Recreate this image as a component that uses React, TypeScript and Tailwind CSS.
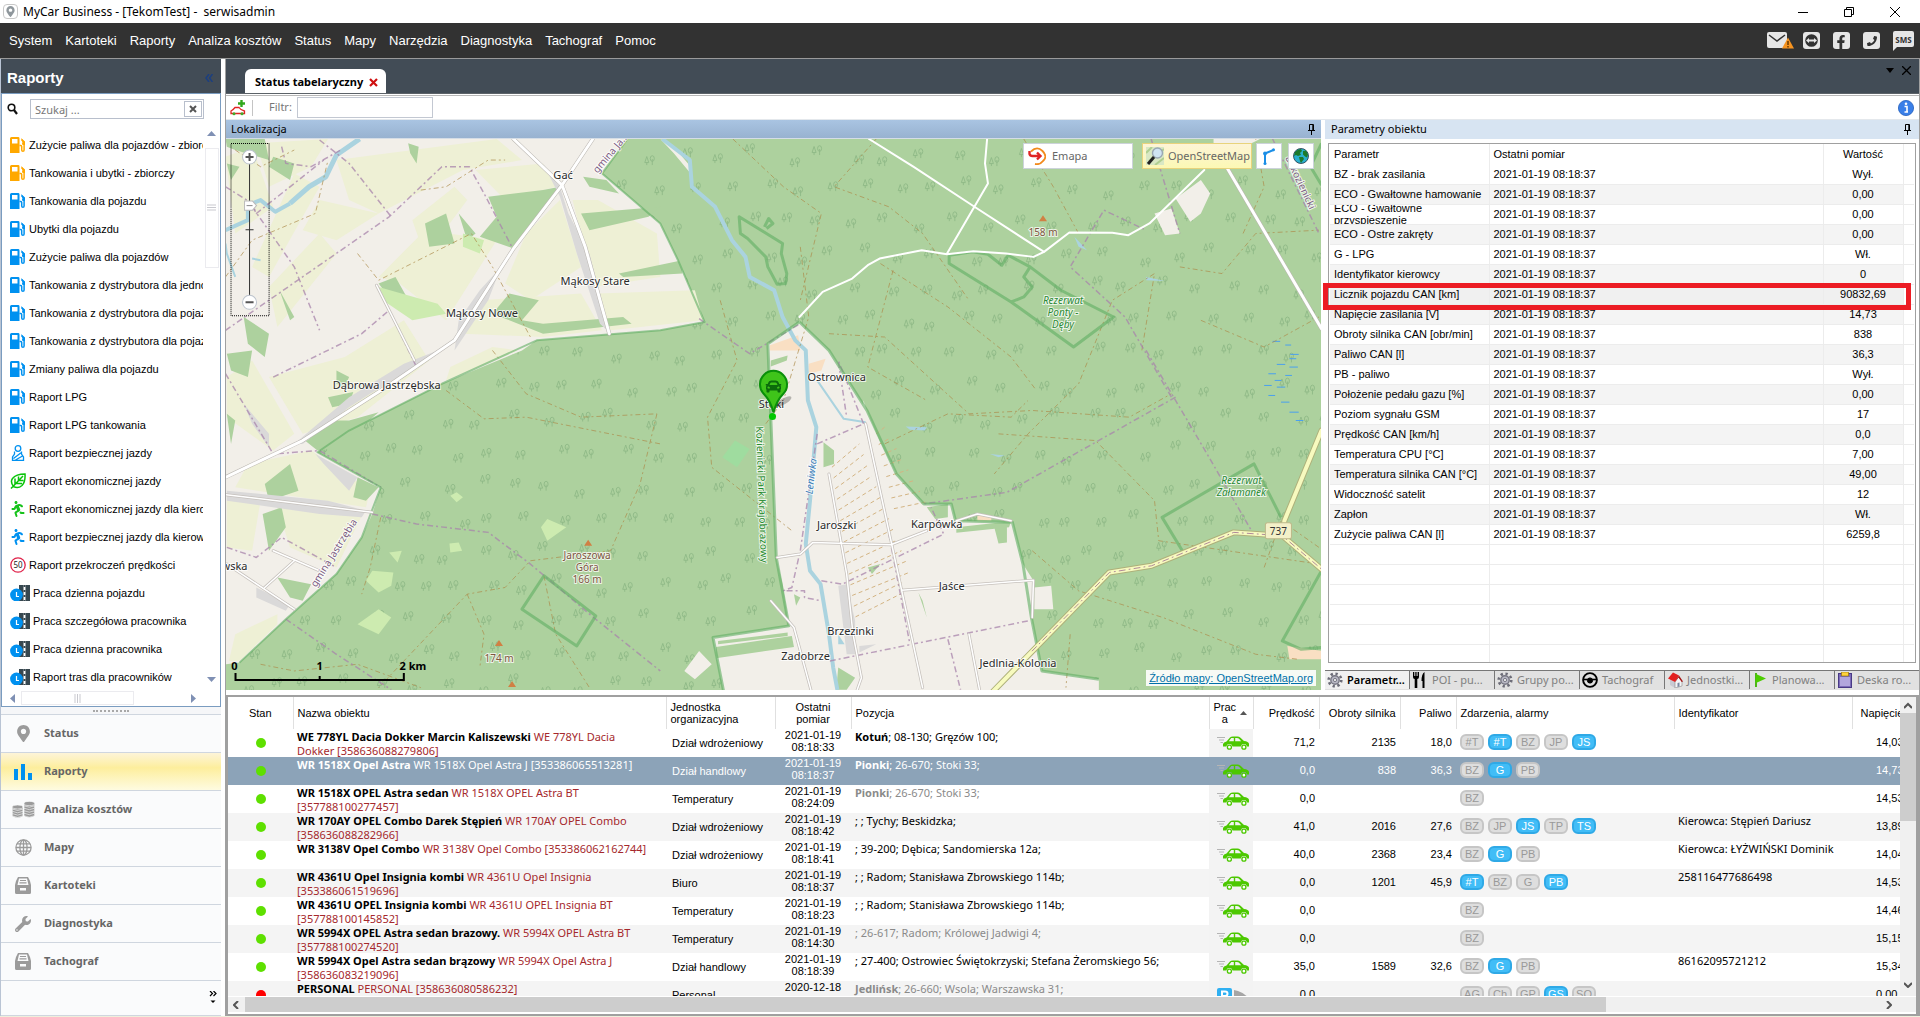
import React from "react";
import { FaCar, FaFacebookF, FaMapMarkerAlt, FaPhoneAlt, FaRunning, FaWrench } from "react-icons/fa";

const MENU = ["System", "Kartoteki", "Raporty", "Analiza kosztów", "Status", "Mapy", "Narzędzia", "Diagnostyka", "Tachograf", "Pomoc"];

type ReportKind = "fuelOrange" | "fuel" | "belt" | "leaf" | "runGreen" | "runBlue" | "limit" | "work";

const REPORTS: [ReportKind, string][] = [
  ["fuelOrange", "Zużycie paliwa dla pojazdów - zbiorczy"],
  ["fuelOrange", "Tankowania i ubytki - zbiorczy"],
  ["fuel", "Tankowania dla pojazdu"],
  ["fuel", "Ubytki dla pojazdu"],
  ["fuel", "Zużycie paliwa dla pojazdów"],
  ["fuel", "Tankowania z dystrybutora dla jednostki"],
  ["fuel", "Tankowania z dystrybutora dla pojazdu"],
  ["fuel", "Tankowania z dystrybutora dla pojazdów"],
  ["fuel", "Zmiany paliwa dla pojazdu"],
  ["fuel", "Raport LPG"],
  ["fuel", "Raport LPG tankowania"],
  ["belt", "Raport bezpiecznej jazdy"],
  ["leaf", "Raport ekonomicznej jazdy"],
  ["runGreen", "Raport ekonomicznej jazdy dla kierowcy"],
  ["runBlue", "Raport bezpiecznej jazdy dla kierowcy"],
  ["limit", "Raport przekroczeń prędkości"],
  ["work", "Praca dzienna pojazdu"],
  ["work", "Praca szczegółowa pracownika"],
  ["work", "Praca dzienna pracownika"],
  ["work", "Raport tras dla pracowników"],
];

const PARAMS: [string, string][] = [
  ["BZ - brak zasilania", "Wył."],
  ["ECO - Gwałtowne hamowanie", "0,00"],
  ["ECO - Gwałtowne przyspieszenie", "0,00"],
  ["ECO - Ostre zakręty", "0,00"],
  ["G - LPG", "Wł."],
  ["Identyfikator kierowcy", "0"],
  ["Licznik pojazdu CAN [km]", "90832,69"],
  ["Napięcie zasilania [V]", "14,73"],
  ["Obroty silnika CAN [obr/min]", "838"],
  ["Paliwo CAN [l]", "36,3"],
  ["PB - paliwo", "Wył."],
  ["Położenie pedału gazu [%]", "0,00"],
  ["Poziom sygnału GSM", "17"],
  ["Prędkość CAN [km/h]", "0,0"],
  ["Temperatura CPU [°C]", "7,00"],
  ["Temperatura silnika CAN [°C]", "49,00"],
  ["Widoczność satelit", "12"],
  ["Zapłon", "Wł."],
  ["Zużycie paliwa CAN [l]", "6259,8"],
];

type Vehicle = {
  name: string;
  tail: string;
  second?: string;
  unit: string;
  date: string;
  time: string;
  city?: string;
  place: string;
  old?: boolean;
  speed: string;
  rpm: string;
  fuel: string;
  tags: string[];
  ident: string;
  volt: string;
  parked?: boolean;
};

/* A tag that starts with "*" is switched on. */
const VEHICLES: Vehicle[] = [
  { name: "WE 778YL Dacia Dokker Marcin Kaliszewski", tail: "WE 778YL Dacia", second: "Dokker [358636088279806]", unit: "Dział wdrożeniowy", date: "2021-01-19", time: "08:18:33", city: "Kotuń", place: "; 08-130; Gręzów 100;", speed: "71,2", rpm: "2135", fuel: "18,0", tags: ["#T", "*#T", "BZ", "JP", "*JS"], ident: "", volt: "14,03" },
  { name: "WR 1518X Opel Astra", tail: "WR 1518X Opel Astra J [353386065513281]", unit: "Dział handlowy", date: "2021-01-19", time: "08:18:37", city: "Pionki", place: "; 26-670; Stoki 33;", speed: "0,0", rpm: "838", fuel: "36,3", tags: ["BZ", "*G", "PB"], ident: "", volt: "14,73" },
  { name: "WR 1518X OPEL Astra sedan", tail: "WR 1518X OPEL Astra BT", second: "[357788100277457]", unit: "Temperatury", date: "2021-01-19", time: "08:24:09", city: "Pionki", place: "; 26-670; Stoki 33;", old: true, speed: "0,0", rpm: "", fuel: "", tags: ["BZ"], ident: "", volt: "14,53" },
  { name: "WR 170AY OPEL Combo Darek Stępień", tail: "WR 170AY OPEL Combo", second: "[358636088282966]", unit: "Dział wdrożeniowy", date: "2021-01-19", time: "08:18:42", place: "; ; Tychy; Beskidzka;", speed: "41,0", rpm: "2016", fuel: "27,6", tags: ["BZ", "JP", "*JS", "TP", "*TS"], ident: "Kierowca: Stępień Dariusz", volt: "13,89" },
  { name: "WR 3138V Opel Combo", tail: "WR 3138V Opel Combo [353386062162744]", unit: "Dział wdrożeniowy", date: "2021-01-19", time: "08:18:41", place: "; 39-200; Dębica; Sandomierska 12a;", speed: "40,0", rpm: "2368", fuel: "23,4", tags: ["BZ", "*G", "PB"], ident: "Kierowca: ŁYŻWIŃSKI Dominik", volt: "14,04" },
  { name: "WR 4361U Opel Insignia kombi", tail: "WR 4361U Opel Insignia", second: "[353386061519696]", unit: "Biuro", date: "2021-01-19", time: "08:18:37", place: "; ; Radom; Stanisława Zbrowskiego 114b;", speed: "0,0", rpm: "1201", fuel: "45,9", tags: ["*#T", "BZ", "G", "*PB"], ident: "258116477686498", volt: "14,53" },
  { name: "WR 4361U OPEL Insignia kombi", tail: "WR 4361U OPEL Insignia BT", second: "[357788100145852]", unit: "Temperatury", date: "2021-01-19", time: "08:18:23", place: "; ; Radom; Stanisława Zbrowskiego 114b;", speed: "0,0", rpm: "", fuel: "", tags: ["BZ"], ident: "", volt: "14,46" },
  { name: "WR 5994X OPEL Astra sedan brazowy.", tail: "WR 5994X OPEL Astra BT", second: "[357788100274520]", unit: "Temperatury", date: "2021-01-19", time: "08:14:30", place: "; 26-617; Radom; Królowej Jadwigi 4;", old: true, speed: "0,0", rpm: "", fuel: "", tags: ["BZ"], ident: "", volt: "15,15" },
  { name: "WR 5994X Opel Astra sedan brązowy", tail: "WR 5994X Opel Astra J", second: "[358636083219096]", unit: "Dział handlowy", date: "2021-01-19", time: "08:18:39", place: "; 27-400; Ostrowiec Świętokrzyski; Stefana Żeromskiego 56;", speed: "35,0", rpm: "1589", fuel: "32,6", tags: ["BZ", "*G", "PB"], ident: "86162095721212", volt: "15,34" },
  { name: "PERSONAL", tail: "PERSONAL [358636080586232]", unit: "Personal", date: "2020-12-18", time: "", city: "Jedlińsk", place: "; 26-660; Wsola; Warszawska 31;", old: true, speed: "0,0", rpm: "", fuel: "", tags: ["AG", "Ch", "GP", "*GS", "SO"], ident: "", volt: "0,00", parked: true },
];

function Fuel({ color }: { color: string }) {
  return (
    <svg width="16" height="16" viewBox="0 0 16 16">
      <path fillRule="evenodd" fill={color} d="M1.5 0h6.600q1.400 0 1.400 1.400V16H0V1.500Q0 0 1.500 0ZM2 2v4.500h5.500V2Z" />
      <path d="M9.500 8.500h1.300q.9 0 .9 1v3.500q0 1.300 1.200 1.300t1.200-1.300V5.500L11.500 2.500" fill="none" stroke={color} strokeWidth="1.500" />
      <path d="M11 1l4 3.500v3.500h-2.500q-1-1.500 0-3Z" fill={color} />
    </svg>
  );
}

function ReportIcon({ kind }: { kind: ReportKind }) {
  switch (kind) {
    case "fuelOrange":
      return <Fuel color="#ffa800" />;
    case "fuel":
      return <Fuel color="#0091f0" />;
    case "belt":
      return (
        <svg width="14" height="16" viewBox="0 0 14 16" fill="none" stroke="#0091f0" strokeWidth="1.300">
          <circle cx="7" cy="3.500" r="2.800" />
          <path d="M3.500 6.500V9L1.500 12v3.300h11V12l-2-3V6.500M11 7L2.500 13.500M4.500 15l7-4" />
        </svg>
      );
    case "leaf":
      return (
        <svg width="16" height="16" viewBox="0 0 16 16" fill="none" stroke="#09c409" strokeWidth="1.500">
          <path d="M15 1Q15.500 9 12 12.500Q8 16 3.500 13.500Q0 9 2.500 5.500Q6 1 15 1ZM1 15.500L13 3M5 11V5.500M8.500 8V3.500M6 10.500h6M9 7.500h4.500" />
        </svg>
      );
    case "runGreen":
      return <FaRunning className="-scale-x-100" size={16} color="#17c21c" />;
    case "runBlue":
      return <FaRunning className="-scale-x-100" size={16} color="#0091f0" />;
    case "limit":
      return (
        <svg width="16" height="16" viewBox="0 0 16 16">
          <circle cx="8" cy="8" r="7.200" fill="#fff" stroke="#e0234a" strokeWidth="1.300" />
          <text x="8" y="11" textAnchor="middle" fontSize="8" fontFamily="Noto Sans" fill="#222">50</text>
        </svg>
      );
    default:
      return (
        <svg width="20" height="16" viewBox="0 0 20 16">
          <path d="M9 0h4.500v16H9zM15.500 0H20v16h-4.500z" fill="#37474f" />
          <path d="M14.500 0v16" stroke="#37474f" strokeWidth="2" strokeDasharray="2 3" />
          <circle cx="6.500" cy="10" r="6.400" fill="#0091f0" />
          <path d="M6.500 7v4.500H9" stroke="#fff" fill="none" strokeWidth="1.200" />
        </svg>
      );
  }
}

function Drawer() {
  return (
    <svg width="16" height="17" viewBox="0 0 16 17">
      <path fillRule="evenodd" fill="#9b9b9b" d="M3 0h10l2 4 1 4v7.500q0 1.500-1.500 1.500h-13Q0 17 0 15.500V8l1-4ZM4 1.500L2.500 8h11L12 1.500ZM5 11v2.500h6V11Z" />
      <path d="M5 3.500h6M4.500 5.800h7" stroke="#9b9b9b" strokeWidth="1.200" />
    </svg>
  );
}

function NavIcon({ name }: { name: string }) {
  if (name === "Status") return <FaMapMarkerAlt size={17} color="#9b9b9b" />;
  if (name === "Raporty")
    return (
      <svg width="18" height="16" viewBox="0 0 18 16" fill="#0091f0">
        <path d="M0 5h4v11H0zM7 0h4v16H7zM14 9h4v7h-4z" />
      </svg>
    );
  if (name === "Analiza kosztów")
    return (
      <svg width="23" height="17" viewBox="0 0 23 17" fill="#9b9b9b" stroke="#fafbfc" strokeWidth=".6">
        {[14.5, 12.2, 9.900, 7.600].map((y) => (
          <path key={y} d={`M.3 ${y - 2}v2.400q5.300 3 10.600 0v-2.400z`} />
        ))}
        <ellipse cx="5.600" cy="6" rx="5.300" ry="2" />
        {[14.5, 12, 9.500, 7, 4.500].map((y) => (
          <path key={y} d={`M12 ${y - 2.200}v2.400q5.300 3 10.600 0v-2.400z`} />
        ))}
        <ellipse cx="17.300" cy="2.500" rx="5.300" ry="2.100" />
      </svg>
    );
  if (name === "Mapy")
    return (
      <svg width="17" height="17" viewBox="0 0 17 17" fill="none" stroke="#9b9b9b" strokeWidth="1.300">
        <circle cx="8.500" cy="8.500" r="7.600" />
        <ellipse cx="8.500" cy="8.500" rx="3.600" ry="7.600" />
        <path d="M8.500 1v15M1 8.500h15M2 4.800h13M2 12.200h13" />
      </svg>
    );
  if (name === "Diagnostyka") return <FaWrench size={16} color="#9b9b9b" />;
  return <Drawer />;
}

function Pin() {
  return (
    <svg width="7" height="11" viewBox="0 0 7 11" fill="none" stroke="#000">
      <path d="M1.500 6V.5h4V6M0 6.500h7M3.500 7v4M4.800 1v5" />
    </svg>
  );
}

function Gear() {
  return (
    <svg width="16" height="16" viewBox="0 0 16 16">
      <circle cx="8" cy="8" r="6.300" fill="none" stroke="#6d6d78" strokeWidth="2.600" strokeDasharray="2.300 2.600" />
      <circle cx="8" cy="8" r="4.200" fill="#b8b8c4" stroke="#777783" strokeWidth="1.400" />
      <circle cx="8" cy="8" r="1.600" fill="#f0f0f0" stroke="#666672" strokeWidth=".8" />
    </svg>
  );
}

function TabIcon({ kind }: { kind: string }) {
  if (kind === "gear") return <Gear />;
  if (kind === "food")
    return (
      <svg width="14" height="16" viewBox="0 0 14 16" fill="#000">
        <path d="M0 0h1.300v4h1V0h1.300v4h1V0H6v5Q6 6.800 4.300 7v9H1.700V7Q0 6.800 0 5ZM11.500 0V16H9.500V9H8.500Q8.500 2 11.500 0Z" />
      </svg>
    );
  if (kind === "wheel")
    return (
      <svg width="16" height="16" viewBox="0 0 16 16" fill="none" stroke="#000">
        <circle cx="8" cy="8" r="6.900" strokeWidth="1.900" />
        <path d="M2 7.500h12" strokeWidth="1.600" />
        <circle cx="8" cy="8.500" r="2.600" fill="#000" />
      </svg>
    );
  if (kind === "house")
    return (
      <svg width="15" height="16" viewBox="0 0 15 16">
        <path d="M2 7l5 3v6l-5-3z" fill="#c9c9d2" />
        <path d="M7 10l3.500-5L14 9v5l-7 2z" fill="#f4f4f6" stroke="#888" strokeWidth=".6" />
        <path d="M0 6.500L5 .5l6 3L7 10z" fill="#e32020" />
        <path d="M11 3.500L15 9.500l-1.300.5L10.500 5.500 7 10z" fill="#a51515" />
        <path d="M9.500 11l2-.6v4l-2 .6z" fill="#7a86a0" />
      </svg>
    );
  if (kind === "flag")
    return (
      <svg width="11" height="14" viewBox="0 0 11 14">
        <path d="M1 0v14" stroke="#3bb300" strokeWidth="1.800" />
        <path d="M1 1l10 4.500L1 10z" fill="#4ccc00" />
      </svg>
    );
  return (
    <svg width="14" height="16" viewBox="0 0 14 16">
      <rect x=".5" y="1.500" width="13" height="14" fill="#7c6bb8" stroke="#493a86" />
      <rect x="2" y="5" width="10" height="9" fill="#b2a6dd" />
      <path d="M3.500 0h7v4h-7z" fill="#ffd23c" stroke="#8d6b00" strokeWidth=".6" />
    </svg>
  );
}

function RunningCar() {
  return (
    <svg width="32" height="14" viewBox="0 0 32 14">
      <path d="M0 1.500h8M2 4h5M3.500 6.500H6" fill="none" stroke="#b5b5b5" strokeWidth="1.200" />
      <path
        fillRule="evenodd"
        fill="#4cc800"
        d="M6 10.500V8Q6.500 6 9.500 5.500L13 1.500Q14 .5 16 .5h4.500q1.500 0 3 1.200L27 5q4.500.5 5 2.800v2.700h-2a3.200 3.200 0 0 0-6.200 0H15.500a3.200 3.200 0 0 0-6.200 0ZM11.800 5.300h5V2h-2.500ZM18.200 5.300h6L21.800 2.600Q21 2 20 2h-1.800Z"
      />
      <circle cx="12.400" cy="11.200" r="2" fill="#fff" stroke="#4cc800" strokeWidth="1.300" />
      <circle cx="26.900" cy="11.200" r="2" fill="#fff" stroke="#4cc800" strokeWidth="1.300" />
    </svg>
  );
}

function ParkedCar() {
  return (
    <svg width="32" height="14" viewBox="0 0 32 14">
      <path d="M17 2l4 1q6 2 9 5.500L32 14H17Z" fill="#a5a5a5" />
      <rect width="15" height="14" rx="2" fill="#2fb0f2" />
      <path d="M5 12V3.500h3q2.500 0 2.500 2.200T8 8H5.500" fill="none" stroke="#fff" strokeWidth="2" />
    </svg>
  );
}

/* Trees are spread over the woods on a jittered grid; fields are painted over them. */
const TREES: [number, number][] = [];
for (let r = 0; r < 17; r++) {
  for (let c = 0; c < 33; c++) {
    const n = Math.abs(Math.sin(r * 12.9898 + c * 78.233) * 43758.5453) % 1;
    const m = Math.abs(Math.sin(r * 39.3467 + c * 11.135) * 24634.6345) % 1;
    TREES.push([Math.round(228 + c * 34 + (r % 2) * 14 + n * 17), Math.round(142 + r * 33 + m * 16)]);
  }
}

const FIELD_STRIPS = [
  "537,470 600,440 650,620 560,700", "610,430 780,417 740,500 640,560", "700,520 760,560 640,830 600,800", "800,480 1180,417 1240,480 1100,510 900,640 830,600",
  "760,600 900,640 800,720 720,690", "640,860 760,700 800,760 660,980", "980,660 1080,560 1110,600 1010,770", "1130,510 1290,490 1320,560 1200,600",
  "900,830 1010,690 1180,720 1060,960 950,850", "1250,700 1330,600 1380,800 1260,900 1200,850", "1360,600 1420,600 1560,700 1568,830 1410,860",
  "1420,880 1650,870 1670,960 1450,990", "1140,900 1380,880 1430,990 1290,1010 1100,1000", "820,1070 960,960 1020,1080 850,1250 720,1300 640,1130",
  "540,1130 600,1080 700,1300 650,1350 540,1250", "1070,1100 1170,1040 1230,1050 1060,1140", "590,1390 740,1350 880,1470 870,1520 560,1460",
  "540,1500 620,1500 600,1650 540,1640", "660,1520 860,1545 800,1700 690,1640", "560,1900 660,1840 660,1870 570,1980 545,1980",
];

const PATHS_BROWN = [
  "M560,450L620,500L700,450", "M1000,570L1060,560L1160,480L1200,480", "M537,830L600,720L750,640L780,480", "M850,760L900,840L1120,700L1170,800L1260,1010",
  "M1060,1170L1150,1255L1250,1250L1568,1330", "M1170,1050L1250,1180L1380,1250L1560,1240", "M905,1550L880,1700L860,1780", "M1560,1240L1520,1450L1450,1650L1260,1680L1200,1760L1110,1780L1020,1900L900,2060",
  "M1292,1725L1320,1900L1400,2060", "M1110,1780L1150,1900L1140,2000", "M620,1990L700,2010L850,1990L1000,2060",
  "M1740,417L1860,560L1950,640L1900,900", "M2080,417L1980,560L2110,620L2190,700L2300,900", "M2430,417L2500,560L2560,700", "M1900,740L1920,950L1860,1200L1800,1300",
  "M1710,900L1750,1080L1680,1250L1690,1400L1880,1590", "M2090,790L2250,920L2400,1070L2460,1170", "M2120,810L2060,1100L2200,1200", "M2710,1050L2740,820L2640,900L2560,1150L2440,1300L2360,1420",
  "M1968,1000L2100,1010L2300,1240L2450,1230L2680,1250L2780,1180", "M2100,1330L2250,1240L2400,1250L2440,1200", "M2370,1300L2600,1320L2740,1500L2750,1620L3130,1690",
  "M2450,1650L2560,1770L2760,1850L2980,1960L3080,1975", "M2540,1900L2530,2060", "M2950,700L3000,560L2980,417", "M2800,800L2900,820L2980,700L3130,690", "M2850,960L3000,1040L3130,950", "M3000,1700L3040,1560L3130,1640",
];

const FIELD_LINES: string[] = [];
for (let i = 0; i < 15; i++) {
  const y = 1400 + i * 32;
  const right = 2030 + i * 10 > 2150 ? 2140 : 2040 + i * 10;
  FIELD_LINES.push(`M${1975 + i * 4},${y}L${right},${y - 70}`);
  if (i < 8) FIELD_LINES.push(`M${2080 + i * 6},${y - 100}L${2100 + i * 14},${y - 120}`);
}

const BOUNDARY = [
  "M537,990L925,650L1050,500L1115,500L1150,580L1220,750", "M537,560L600,610L610,640L770,480", "M600,620L700,800L760,990", "M537,1120L650,1360L760,1350L905,1460",
  "M670,440L680,490L740,500L810,450", "M650,1130L860,1000L925,930", "M885,1540L990,1570L1160,1595L1260,1690L1410,1850L1568,2010", "M680,1855L800,1960L930,2066",
  "M540,1640L610,1670L670,1610L800,1700", "M760,420L830,490L930,650", "M925,930L990,1100", "M1660,955L1780,1060L1900,970",
  "M2780,1190L2670,950L2540,800L2620,630L2720,690", "M2732,417L2800,700M2720,1050L2860,1350L2970,1590", "M2790,1190L2390,1475L2190,1510", "M3020,417L3130,700",
  "M1940,1330L2050,1270M2050,1270L1990,1080L2010,1250", "M1940,1300L1900,1650L1880,1760L1860,1770L1910,1770L1910,1790L1950,1800", "M1970,1980L2440,1860", "M1950,1740L2000,1750L2240,1600L2210,1520",
  "M2110,1600L2160,1930M2250,1915L2280,2066",
];

function MapView() {
  return (
    <svg className="block h-full w-full" viewBox="226 139 1094 550" preserveAspectRatio="xMidYMid slice" role="img" aria-label="Mapa">
      <defs>
        <g id="tree" fill="none" stroke="#8fb987" strokeWidth=".9">
          <path d="M2.500 1.500L.5 7.500h4ZM2.500 7.500v2.500" />
          <ellipse cx="8" cy="3.500" rx="2" ry="2.800" />
          <path d="M8 4v6" />
        </g>
      </defs>
      <rect x="226" y="139" width="1094" height="550" fill="#add19e" />
      {TREES.map(([x, y], i) => (
        <use key={i} href="#tree" x={x} y={y} />
      ))}
      <g transform="scale(.42092 .33333)" fill="none" strokeLinejoin="round">
        <path fill="#f2efe9" d="M537,417H1490L1430,520L1568,670L1610,780L1673,965L1568,990L1275,1020L1240,1050L1050,1150L830,1290L755,1355L905,1460L885,1540L860,1610L800,1720L720,1810L680,1855L570,1985L537,1990Z" />
        {FIELD_STRIPS.map((p) => (
          <polygon key={p} points={p} fill="#eef0d5" />
        ))}
        <path fill="#f2efe9" d="M1898,965L1968,1050L2058,1230L2088,1320L2128,1420L2193,1510L2258,1510L2268,1560L2403,1565L2428,1690L2453,1740L2448,1850L2473,2010L2608,2035V2070H1718L1693,1910L1873,1875L1858,1750L1843,1670L1830,1250L1823,1030Z" />
        <path fill="#f2efe9" d="M2740,640L2780,625L2800,700L2765,705ZM2790,595L2850,540L2872,580L2850,640L2825,665ZM2455,1760L2495,1755L2500,1825L2455,1825ZM1625,2010L1660,1950L1690,1990L1650,2035ZM1568,417L1600,440L1640,500L1640,520L1600,460ZM2880,417H2990L2970,430H2880ZM2050,1200L2062,1250L2045,1250Z" />
        <path fill="#f9dfc3" d="M1828,1035L1895,1005L1900,1050H1828ZM1920,1090L1960,1075L1950,1110L1920,1120ZM2320,1545H2353V1560H2320ZM3055,1935L3136,1950V1975H3060Z" />
        <path fill="#add19e" d="M537,417H630L640,480L560,450L540,440ZM650,470L700,490L690,540L640,500ZM540,490L570,500L550,540ZM970,430L995,440L990,490L975,460ZM1160,590L1290,570L1330,560L1220,745L1140,710L1180,650ZM1010,670L1060,640L1080,730L1020,740ZM1090,640L1130,700L1110,720ZM1380,640L1568,620L1540,650L1400,690ZM900,850L940,830L980,920L930,900ZM1210,880L1280,900L1240,960L1290,970L1480,950L1500,970L1290,1000L1170,940ZM1470,820L1620,780V820L1480,830ZM665,870L700,950L690,960ZM580,950L640,1000L630,1070L590,1030ZM540,1060L600,1050L590,1130L550,1110ZM1385,530L1440,540L1470,580L1400,560ZM800,1110L830,1130L820,1160L800,1150ZM780,1190L840,1175L830,1210L790,1220ZM830,1260L900,1235L850,1290L780,1345L755,1350L720,1315L790,1260ZM540,1240L560,1260L550,1330ZM690,1390L710,1470L640,1500L630,1450ZM850,1430L900,1460L870,1500L840,1490ZM625,1540L670,1520L680,1580L640,1650ZM660,1730L740,1750L720,1800L690,1790Z" />
        <path fill="#cdebb0" d="M900,860L1040,910L1060,940L980,960L910,900ZM1100,700L1150,720L1140,760L1100,740ZM1285,1580L1300,1555L1345,1580L1300,1620ZM870,1740L885,1710L935,1715L930,1755L900,1775ZM850,1870L900,1825L930,1850L900,1900ZM1070,1485L1085,1475L1100,1490L1085,1505ZM1068,1628L1090,1625L1098,1650L1070,1655ZM925,1655L955,1650L945,1685Z" />
        <path fill="#9fdc9f" d="M1715,1370L1745,1320L1780,1345L1750,1400Z" />
        <path fill="#add19e" d="M1830,1080L1870,1065L1868,1080L1830,1098ZM1955,1325L1980,1350V1390L1955,1400ZM1700,1938L1880,1905L1885,1938L1700,1972ZM1705,1920L1870,1895V1905L1705,1930ZM2360,1580L2390,1575V1625L2370,1628ZM2270,1580L2400,1562L2395,1580L2270,1596ZM1990,2000L2030,2030L2010,2066H1985ZM1885,1780L1900,1790L1890,1815ZM2200,1520L2250,1510V1550L2220,1555ZM2060,1700L2090,1690L2070,1720ZM2180,1775L2200,1850L2190,1800Z" />
        <path fill="#dad9d9" d="M1290,490L1330,560L1350,640L1400,760L1450,1000L1425,970L1370,760L1330,590ZM1140,870L1190,800L1160,900L1080,1050L1090,960ZM960,1090L1040,1050L1000,1090L880,1180L830,1220L720,1330L700,1330L830,1190ZM580,1210L640,1300V1340L600,1270ZM540,1470L780,1500L870,1530L860,1550L760,1540L540,1500ZM750,1360L850,1430L830,1470L770,1390ZM610,1760L690,1810L680,1830L610,1790ZM1990,1755L2010,1750L2030,1860L2030,1960L2010,1960ZM2040,1935L2080,1930L2040,1955Z" />

        <g stroke="#aad3df">
          <path vectorEffect="non-scaling-stroke" strokeWidth="5" d="M855,417L800,465L775,530L735,560L690,610" />
          <path vectorEffect="non-scaling-stroke" strokeWidth="4" d="M690,610L655,635L620,600L590,615L590,660L537,690" />
          <path vectorEffect="non-scaling-stroke" strokeWidth="4" d="M1573,417L1638,480L1643,560L1698,620L1738,720L1770,770L1780,830L1838,870L1858,950L1888,1020L1913,1050L1918,1200L1938,1280L1923,1500L1913,1630L1923,1710L1948,1750L1968,1900L1978,2000L1988,2067" />
          <path vectorEffect="non-scaling-stroke" strokeWidth="2" d="M1940,1140L2003,1255L2055,1265M537,730L540,760L560,830M600,775L620,780" />
        </g>
        <path fill="#aad3df" d="M2150,1278L2200,1280L2195,1290L2160,1288ZM2550,710L2580,750L2560,740ZM2720,830L2765,842L2720,840ZM2350,1360L2385,1365L2370,1370ZM1990,1900L2005,1930L1990,1930Z" />
        <path vectorEffect="non-scaling-stroke" stroke="#4aa0ee" strokeWidth="1" d="M3020,1023h18M3050,1034h14M3062,1062h20M3030,1092h20M3060,1100h20M3010,1120h18M3050,1125h16M3000,1155h18M3030,1160h20M3010,1185h16M3040,1205h20M3060,1235h22M3075,1260h18M3025,1140h16M3060,1075h16" />

        {PATHS_BROWN.map((d) => (
          <path key={d} d={d} stroke="#ad8b4c" strokeOpacity=".7" strokeWidth="1" strokeDasharray="5 3 2 3" vectorEffect="non-scaling-stroke" />
        ))}
        {FIELD_LINES.map((d) => (
          <path key={d} d={d} stroke="#d3b483" strokeWidth="1" strokeDasharray="4 3" vectorEffect="non-scaling-stroke" />
        ))}
        {BOUNDARY.map((d) => (
          <path key={d} d={d} stroke="#a884ab" strokeOpacity=".75" strokeWidth="1.500" strokeDasharray="6 3 2 3" vectorEffect="non-scaling-stroke" />
        ))}

        <g stroke="#5fae62" strokeOpacity=".6">
          <path vectorEffect="non-scaling-stroke" strokeWidth="2" d="M1490,417L1430,520L1568,670L1610,780L1673,965L1568,990L1275,1020L1050,1150L830,1290L755,1355L905,1460L860,1610L800,1720L680,1855L570,1985" />
          <path vectorEffect="non-scaling-stroke" strokeWidth="3" d="M1898,965L1823,1030L1830,1250L1843,1670L1873,1875L1693,1910L1718,2070M1898,965L1968,1050L2058,1230L2128,1420L2193,1510L2258,1510L2268,1560L2403,1565L2428,1690L2448,1850L2473,2010L2608,2035" />
          <path vectorEffect="non-scaling-stroke" strokeWidth="3" d="M2253,765L2308,755L2345,762L2378,795L2393,765L2445,800L2430,830L2450,860L2430,890L2400,905L2253,790ZM2445,800L2518,870L2643,950L2548,1040L2400,905" />
          <path vectorEffect="non-scaling-stroke" strokeWidth="3" d="M1755,650L1858,730L1855,760L1868,820L1865,850L1845,852L1823,800L1818,770L1775,715L1758,700ZM1815,680L1825,655L1835,670L1820,685" />
          <path vectorEffect="non-scaling-stroke" strokeWidth="3" d="M1292,1725L1415,1845L1370,1935L1240,1825ZM2806,1650L2758,1550L2976,1390L3040,1550M3136,1710L3043,1920L3088,1945L3136,1940M3136,430L3110,500L3136,555" />
        </g>

        <g strokeLinecap="round">
          <g stroke="#b9b5b0">
            <path vectorEffect="non-scaling-stroke" strokeWidth="4" d="M1220,417L1335,555L1408,417M1335,555L1220,745L1080,1020L930,1150L720,1320L537,1430M1335,555L1390,740L1447,1000M2913,505L3136,985" />
          </g>
          <g stroke="#ffffff">
            <path vectorEffect="non-scaling-stroke" strokeWidth="3" d="M1220,417L1335,555L1408,417M1335,555L1220,745L1080,1020L930,1150L720,1320L537,1430M1335,555L1390,740L1447,1000M2913,505L3136,985" />
            <path vectorEffect="non-scaling-stroke" strokeWidth="2" d="M2063,417L2168,500L2313,620L2478,755M2343,417L2338,490L2345,550L2248,760M1898,950L1953,875L2023,835L2060,795L2088,775L2188,750L2248,762L2310,753L2388,760L2453,770L2478,755L2538,697L2640,698L2678,705L2728,670L2858,510" />
          </g>
          <g stroke="#c6c1bc">
            <path vectorEffect="non-scaling-stroke" strokeWidth="3" d="M537,1482L885,1535M540,1690L700,1825M700,1680L630,1760M650,1650L760,1710M895,855L985,1080M1845,1670L1900,1660L1930,1625L2115,1632L2200,1590M1968,1420L2010,1720L2025,1900L2045,2030L2035,2066M2055,1270L2115,1620L2190,2060M2140,1768L2453,1738L2450,1850M1830,1800L1885,1880L1925,2066M2270,1560L2320,1540L2400,1560M2300,1900L2325,2066" />
          </g>
          <g stroke="#ffffff">
            <path vectorEffect="non-scaling-stroke" strokeWidth="1.500" d="M537,1482L885,1535M540,1690L700,1825M700,1680L630,1760M650,1650L760,1710M895,855L985,1080M1845,1670L1900,1660L1930,1625L2115,1632L2200,1590M1968,1420L2010,1720L2025,1900L2045,2030L2035,2066M2055,1270L2115,1620L2190,2060M2140,1768L2453,1738L2450,1850M1830,1800L1885,1880L1925,2066M2270,1560L2320,1540L2400,1560M2300,1900L2325,2066" />
          </g>
          <path vectorEffect="non-scaling-stroke" stroke="#aeb07a" strokeWidth="6" d="M2358,2070L2633,1715L2733,1695L2928,1595L3043,1605L3136,1705M3043,1605L3048,1560L3136,1290" />
          <path vectorEffect="non-scaling-stroke" stroke="#f7fabf" strokeWidth="4" d="M2358,2070L2633,1715L2733,1695L2928,1595L3043,1605L3136,1705M3043,1605L3048,1560L3136,1290" />
          <path vectorEffect="non-scaling-stroke" stroke="#b08a9a" strokeWidth="1" strokeDasharray="6 4 1 4" d="M2450,1950L2633,1715L2733,1695L2928,1595L3043,1605L3136,1705" />
        </g>
      </g>

      <g fill="#d08044">
        <path d="M1042 215l4 6h-8ZM588 539l4 6h-8ZM499 639l4 6h-8ZM512 680l4 6h-8Z" />
      </g>
      <g fontFamily="'Noto Sans', sans-serif" fontSize="11" textAnchor="middle" stroke="#ffffff" strokeOpacity=".75" strokeWidth="2" style={{ paintOrder: "stroke" }} fill="#2a2a2a">
        <text x="563" y="179">Gać</text>
        <text x="595" y="285">Mąkosy Stare</text>
        <text x="482" y="317">Mąkosy Nowe</text>
        <text x="387" y="389">Dąbrowa Jastrzębska</text>
        <text x="836" y="381">Ostrownica</text>
        <text x="771" y="408">Stoki</text>
        <text x="836" y="528">Jaroszki</text>
        <text x="936" y="527">Karpówka</text>
        <text x="951" y="589">Jaśce</text>
        <text x="850" y="634">Brzezinki</text>
        <text x="805" y="659">Zadobrze</text>
        <text x="1017" y="666">Jedlnia-Kolonia</text>
        <text x="235" y="569">wska</text>
        <g fill="#7d5540" fontSize="10">
          <text x="587" y="558">Jaroszowa</text>
          <text x="587" y="570">Góra</text>
          <text x="587" y="582">166 m</text>
          <text x="499" y="661">174 m</text>
          <text x="1042" y="236">158 m</text>
        </g>
        <g fill="#2a8a35" fontSize="10" fontStyle="italic">
          <text x="1062" y="304">Rezerwat</text>
          <text x="1062" y="316">Ponty -</text>
          <text x="1062" y="328">Dęby</text>
          <text x="1240" y="483">Rezerwat</text>
          <text x="1240" y="495">Załamanek</text>
        </g>
        <text fill="#1f8a2c" fontSize="10" transform="translate(758 494) rotate(88)">Kozienicki Park Krajobrazowy</text>
        <text fill="#3d7fb8" fontSize="10" fontStyle="italic" transform="translate(814 476) rotate(-83)">Leniwka</text>
        <text fill="#7b5c82" fontSize="10" transform="translate(337 554) rotate(-58)">gmina Jastrzębia</text>
        <text fill="#7b5c82" fontSize="10" transform="translate(613 155) rotate(-50)">gmina Ja...</text>
        <text fill="#7b5c82" fontSize="10" transform="translate(1296 184) rotate(65)">at kozienicki</text>
      </g>
      <rect x="1264" y="522" width="26" height="16" rx="2" fill="#f3f0c8" stroke="#bdb98a" />
      <text x="1277" y="534" textAnchor="middle" fontFamily="'Noto Sans', sans-serif" fontSize="10" fill="#333">737</text>

      <ellipse cx="783" cy="401" rx="9" ry="3" fill="#000" opacity=".25" transform="rotate(-30 783 401)" />
      <path d="M773 412Q770 400 763 393A13.500 13.500 0 1 1 783 393Q776 400 773 412Z" fill="#3fc41a" stroke="#0a8f0a" strokeWidth="2" />
      <g transform="translate(765 378)" color="#0b6b0b">
        <FaCar size={16} />
      </g>
      <circle cx="772" cy="416" r="3.500" fill="#00c800" />

      <rect x="231.500" y="143.500" width="38" height="172" fill="none" stroke="#000" strokeDasharray="1 1" />
      <path d="M250 160V300M246 229.500h8" stroke="#333" strokeWidth="1" />
      <path d="M245 201h8l4 4.500-4 4.500h-8z" fill="#fff" stroke="#bbb" />
      <circle cx="250" cy="157" r="7" fill="#fff" stroke="#bcc3cc" />
      <circle cx="250" cy="302" r="7" fill="#fff" stroke="#bcc3cc" />
      <path d="M246 157h8M250 153v8M246 302h8" stroke="#555" strokeWidth="2" />
      <path d="M247 205.500h6" stroke="#888" />

      <path d="M236 672v7h168v-7M320 675v4" fill="none" stroke="#000" strokeWidth="2" />
      <g fontFamily="'Noto Sans', sans-serif" fontSize="11" fontWeight="700" textAnchor="middle">
        <text x="235" y="669">0</text>
        <text x="320" y="669">1</text>
        <text x="413" y="669">2 km</text>
      </g>
    </svg>
  );
}

function Tag({ label }: { label: string }) {
  const on = label.startsWith("*");
  return (
    <span className={`flex h-4 w-6 items-center justify-center rounded-md border-2 text-[11px] leading-none ${on ? "border-[#2fa9e6] bg-[#41bdf7] text-white" : "border-[#c6c6c6] bg-[#dedede] text-[#999]"}`}>
      {on ? label.slice(1) : label}
    </span>
  );
}

const TH = "border-r border-[#e0e0e0] px-1 pt-0 pb-px text-[11px] leading-3 font-normal";
const TAHOMA = "font-['Noto_Sans',sans-serif]";

function VehicleTable() {
  return (
    <table className="w-full table-fixed border-collapse text-[11px]">
      <colgroup>
        <col className="w-[65px]" />
        <col className="w-[373px]" />
        <col className="w-[109px]" />
        <col className="w-[76px]" />
        <col />
        <col className="w-[44px]" />
        <col className="w-[66px]" />
        <col className="w-[81px]" />
        <col className="w-[56px]" />
        <col className="w-[218px]" />
        <col className="w-[178px]" />
        <col className="w-[48px]" />
      </colgroup>
      <thead>
        <tr className="h-8">
          <th className={`${TH} text-center`}>Stan</th>
          <th className={`${TH} text-left`}>Nazwa obiektu</th>
          <th className={`${TH} text-left`}>Jednostka<br />organizacyjna</th>
          <th className={`${TH} text-center`}>Ostatni<br />pomiar</th>
          <th className={`${TH} text-left`}>Pozycja</th>
          <th className={TH}>
            <span className="flex items-center gap-1">
              <span className="text-center">Prac<br />a</span>
              <svg width="7" height="4" viewBox="0 0 7 4"><path d="M3.500 0L7 4H0z" fill="#555" /></svg>
            </span>
          </th>
          <th className={`${TH} text-right`}>Prędkość</th>
          <th className={`${TH} text-right whitespace-nowrap`}>Obroty silnika</th>
          <th className={`${TH} text-right`}>Paliwo</th>
          <th className={`${TH} text-left`}>Zdarzenia, alarmy</th>
          <th className={`${TH} text-left`}>Identyfikator</th>
          <th className="overflow-hidden p-0 pl-2 text-left text-[11px] font-normal">Napięcie</th>
        </tr>
      </thead>
      <tbody>
        {VEHICLES.map((v, i) => {
          const sel = i === 1;
          return (
            <tr key={i} className={sel ? "bg-[#8ca3b8] text-white" : i % 2 ? "bg-[#f4f4f4]" : "bg-white"}>
              <td className="h-7 p-0 pb-px">
                <span className={`mx-auto block size-[10px] rounded-full ${v.parked ? "bg-[#f00]" : "bg-[#5ee000]"}`} />
              </td>
              <td className="p-0">
                <div className={`${TAHOMA} h-7 overflow-hidden pt-px pl-1 leading-[14px] whitespace-nowrap ${sel ? "" : "text-[#a5282c]"}`}>
                  <b className={sel ? "" : "text-black"}>{v.name}</b> {v.tail}
                  {v.second && <><br />{v.second}</>}
                </div>
              </td>
              <td className="p-0 pl-[6px] whitespace-nowrap">{v.unit}</td>
              <td className="p-0"><div className="h-7 overflow-hidden text-center leading-3">{v.date}<br />{v.time}</div></td>
              <td className="p-0">
                <div className={`${TAHOMA} h-7 overflow-hidden pt-px pl-1 leading-[14px] whitespace-nowrap ${v.old ? "text-[#8a8a8a]" : ""}`}>
                  {v.city && <b>{v.city}</b>}{v.place}
                </div>
              </td>
              <td className={`p-0 pb-px pl-2 ${sel ? "" : "bg-[#f3f3f3]"}`}>{v.parked ? <ParkedCar /> : <RunningCar />}</td>
              <td className="p-0 pr-1 pb-px text-right">{v.speed}</td>
              <td className="p-0 pr-1 pb-px text-right">{v.rpm}</td>
              <td className="p-0 pr-1 pb-px text-right">{v.fuel}</td>
              <td className="p-0 pb-[2px] pl-1"><div className="flex gap-1">{v.tags.map((t) => <Tag key={t} label={t} />)}</div></td>
              <td className="p-0"><div className={`${TAHOMA} h-7 pt-px pl-1 leading-[14px] whitespace-nowrap`}>{v.ident}</div></td>
              <td className="overflow-hidden p-0 pb-px pl-6">{v.volt}</td>
            </tr>
          );
        })}
      </tbody>
    </table>
  );
}

const SIDE_TABS: [string, string, string][] = [
  ["gear", "Parametr...", "font-semibold text-black bg-[#f0f0f0]"],
  ["food", "POI - pu...", ""],
  ["gear", "Grupy po...", ""],
  ["wheel", "Tachograf", ""],
  ["house", "Jednostki...", ""],
  ["flag", "Planowa...", ""],
  ["board", "Deska ro...", ""],
];

function ParamPanel() {
  return (
    <section className="flex w-[594px] shrink-0 flex-col">
      <header className={`${TAHOMA} flex h-[19px] shrink-0 items-center justify-between bg-[#d7e4f2] pr-2 pl-[6px] text-[11px]`}>
        Parametry obiektu <Pin />
      </header>
      <div className="mx-[3px] mt-1 mb-[7px] min-h-0 flex-1 overflow-hidden border border-[#a0a0a0] px-px">
        <table className="w-full table-fixed border-collapse text-[11px]">
          <colgroup>
            <col className="w-[159px]" />
            <col />
            <col className="w-[80px]" />
            <col className="w-[11px]" />
          </colgroup>
          <thead>
            <tr className="h-5 text-left">
              <th className="border-r border-[#ececec] pl-1 font-normal">Parametr</th>
              <th className="border-r border-[#ececec] pl-1 font-normal">Ostatni pomiar</th>
              <th className="border-r border-[#ececec] text-center font-normal">Wartość</th>
              <th />
            </tr>
          </thead>
          <tbody>
            {PARAMS.map(([k, v], i) => (
              <tr key={k} className={`h-5 border-b border-[#ececec] ${i === 6 ? "bg-[#f0f0f0]" : i % 2 ? "bg-[#f4f4f4]" : "bg-white"}`}>
                <td className="border-r border-[#ececec] p-0 pl-1">
                  <div className="flex h-[19px] items-center overflow-hidden leading-3">{k}</div>
                </td>
                <td className="border-r border-[#ececec] p-0 pl-1">2021-01-19 08:18:37</td>
                <td className="border-r border-[#ececec] p-0 text-center">{v}</td>
                <td className="bg-white p-0" />
              </tr>
            ))}
            {[0, 1, 2, 3, 4, 5, 6].map((i) => (
              <tr key={i} className="h-5 border-b border-[#ececec]">
                <td className="border-r border-[#ececec]" />
                <td className="border-r border-[#ececec]" />
                <td className="border-r border-[#ececec]" />
                <td />
              </tr>
            ))}
          </tbody>
        </table>
      </div>
      <div className={`${TAHOMA} flex h-5 shrink-0 border-t border-b border-t-[#777] border-b-[#e1e1e1] bg-[#e1e1e1] text-[11px]`} role="tablist">
        {SIDE_TABS.map(([icon, label, cls], i) => (
          <button key={label} role="tab" aria-selected={i === 0} className={`flex flex-1 items-center gap-1 overflow-hidden border-r border-[#777] pl-[2px] whitespace-nowrap last:border-r-0 ${cls || "text-[#808080]"}`}>
            <span className="flex w-4 shrink-0 justify-center"><TabIcon kind={icon} /></span>
            {label}
          </button>
        ))}
      </div>
    </section>
  );
}

function Sidebar() {
  return (
    <aside className="flex w-[221px] shrink-0 flex-col border-l border-[#b9c4d4] bg-[#f5f6f8]">
      <header className="flex h-[34px] shrink-0 items-center justify-between bg-[#424c56] pt-1 pr-2 pl-[6px]">
        <h1 className="text-[15px] font-bold text-white">Raporty</h1>
        <button aria-label="Zwiń">
          <svg width="8" height="8" viewBox="0 0 8 8" fill="none" stroke="#1c3f80" strokeWidth="1.500"><path d="M4 0L1 4l3 4M7.500 0l-3 4 3 4" /></svg>
        </button>
      </header>
      <div className="flex min-h-0 flex-1 flex-col border border-[#7a9cc0] bg-white">
        <div className="flex h-[30px] shrink-0 items-center gap-3 pl-[5px]">
          <svg width="11" height="12" viewBox="0 0 11 12" fill="none" stroke="#111" strokeWidth="1.600">
            <circle cx="4.500" cy="4.500" r="3.300" /><path d="M7 7l3 4" strokeWidth="2.200" />
          </svg>
          <div className="flex h-5 w-[174px] items-center border border-[#b8bfcc] pr-px">
            <input aria-label="Szukaj" placeholder="Szukaj ..." className="h-full min-w-0 flex-1 pl-1 font-['Noto_Sans',sans-serif] text-[11px] placeholder:text-[#777]" />
            <button aria-label="Wyczyść" className="flex h-4 w-[18px] items-center justify-center border border-[#b8bfcc]">
              <svg width="8" height="8" viewBox="0 0 8 8"><path d="M1 1l6 6M7 1L1 7" stroke="#555" strokeWidth="2" /></svg>
            </button>
          </div>
        </div>
        <div className="flex min-h-0 flex-1 pt-[7px]">
          <ul className="min-w-0 flex-1 overflow-hidden">
            {REPORTS.map(([k, t]) => (
              <li key={t} className="flex h-7 items-center gap-[3px] pl-2 text-[11px] whitespace-nowrap">
                <span className="flex min-w-4 shrink-0 justify-center"><ReportIcon kind={k} /></span>
                {t}
              </li>
            ))}
          </ul>
          <div className="flex w-[17px] flex-col items-center pb-2">
            <svg width="9" height="5" viewBox="0 0 9 5"><path d="M4.500 0L9 5H0z" fill="#7f90b4" /></svg>
            <div className="mt-3 flex h-[120px] w-[14px] items-center justify-center border border-[#ebebef]">
              <svg width="9" height="8" viewBox="0 0 9 8"><path d="M0 1h9M0 3.500h9M0 6h9" stroke="#c9c9cf" /></svg>
            </div>
            <svg className="mt-auto" width="9" height="5" viewBox="0 0 9 5"><path d="M0 0h9L4.500 5z" fill="#7f90b4" /></svg>
          </div>
        </div>
        <div className="flex h-4 shrink-0 items-center pr-6 pl-2">
          <svg width="5" height="9" viewBox="0 0 5 9"><path d="M5 0v9L0 4.500z" fill="#7f90b4" /></svg>
          <div className="ml-[6px] flex h-[14px] w-[113px] items-center justify-center border border-[#ebebef]">
            <svg width="8" height="9" viewBox="0 0 8 9"><path d="M1 0v9M3.500 0v9M6 0v9" stroke="#c9c9cf" /></svg>
          </div>
          <svg className="ml-auto" width="5" height="9" viewBox="0 0 5 9"><path d="M0 0v9L5 4.500z" fill="#7f90b4" /></svg>
        </div>
      </div>
      <div className="flex h-[7px] shrink-0 items-center justify-center">
        <span className="w-9 border-t-2 border-dotted border-[#a8a8a8]" />
      </div>
      <nav className="shrink-0 border-t border-[#cfd6df] bg-[#fafbfc]">
        {["Status", "Raporty", "Analiza kosztów", "Mapy", "Kartoteki", "Diagnostyka", "Tachograf"].map((n) => (
          <button
            key={n}
            className={`flex h-[38px] w-full items-center gap-[9px] border-b border-[#cfd6df] pl-[10px] text-[11px] font-bold text-[#666] ${TAHOMA} ${n === "Raporty" ? "bg-linear-to-b from-[#fdf4d8] via-[#fdee9c] via-40% to-[#fefbe0]" : ""}`}
          >
            <span className="flex w-6 justify-center"><NavIcon name={n} /></span>
            {n}
          </button>
        ))}
        <div className="flex h-[35px] items-end justify-end border-b border-[#cfd6df] pr-1 pb-[11px]">
          <svg width="8" height="13" viewBox="0 0 8 13" fill="none" stroke="#000" strokeWidth="1.200">
            <path d="M1 0l2.500 2.500L1 5M4.500 0L7 2.500 4.500 5" /><path d="M1.500 9.500h5L4 12z" fill="#000" stroke="none" />
          </svg>
        </div>
      </nav>
    </aside>
  );
}

export default function App() {
  return (
    <div className="relative flex h-screen flex-col overflow-hidden bg-white font-['Liberation_Sans',Arial,sans-serif] text-[11px] text-black">
      <header className={`${TAHOMA} flex h-[23px] shrink-0 items-center gap-[5px] pl-[3px] text-xs`}>
        <span className="flex size-[15px] items-center justify-center rounded-sm border border-[#c8c8c8]">
          <FaMapMarkerAlt size={11} color="#8f979c" />
        </span>
        <span className="whitespace-pre">MyCar Business - [TekomTest] -  serwisadmin</span>
        <div className="ml-auto flex items-center gap-9 pr-5">
          <button aria-label="Minimalizuj"><svg width="10" height="10" viewBox="0 0 10 10"><path d="M0 5.500h10" stroke="#000" /></svg></button>
          <button aria-label="Przywróć"><svg width="10" height="10" viewBox="0 0 10 10" fill="none" stroke="#000"><path d="M.5 2.500h7v7h-7zM2.500 2V.5h7v7H8" /></svg></button>
          <button aria-label="Zamknij"><svg width="10" height="10" viewBox="0 0 10 10"><path d="M0 0l10 10M10 0L0 10" stroke="#000" /></svg></button>
        </div>
      </header>
      <nav className="flex h-[35px] shrink-0 items-center gap-[13px] bg-[#323232] pr-[6px] pl-[9px] text-[13px] text-white">
        {MENU.map((m) => <button key={m}>{m}</button>)}
        <div className="ml-auto flex items-center gap-[13px]">
          <button aria-label="Wiadomości">
            <svg width="27" height="17" viewBox="0 0 27 17">
              <rect width="20" height="16" rx="2" fill="#e6e6e6" /><path d="M2 3l8 6 8-6" fill="none" stroke="#323232" strokeWidth="1.500" />
              <path d="M21 5.500L27 16.500H15z" fill="#f79420" /><path d="M21 9v4M21 14v1.500" stroke="#6b3a00" strokeWidth="1.500" />
            </svg>
          </button>
          <button aria-label="TeamViewer" className="-ml-1">
            <svg width="17" height="17" viewBox="0 0 17 17"><rect width="17" height="17" rx="3" fill="#e6e6e6" /><circle cx="8.500" cy="8.500" r="6.300" fill="#323232" /><path d="M3 8.500l3-2.500v1.500h5V6l3 2.500-3 2.500V9.500H6V11z" fill="#e6e6e6" /></svg>
          </button>
          <button aria-label="Facebook" className="flex size-[17px] items-end justify-end rounded-[3px] bg-[#e6e6e6] pr-[2px] text-[#323232]"><FaFacebookF size={14} /></button>
          <button aria-label="Telefon" className="flex size-[17px] items-center justify-center rounded-[3px] bg-[#e6e6e6] text-[#323232]"><FaPhoneAlt className="-scale-x-100" size={10} /></button>
          <button aria-label="SMS">
            <svg width="21" height="20" viewBox="0 0 21 20"><path d="M2 0h17q2 0 2 2v12q0 2-2 2H4l-4 4V2q0-2 2-2Z" fill="#e6e6e6" /><text x="10.500" y="11.500" textAnchor="middle" fontFamily="'Noto Sans', sans-serif" fontWeight="700" fontSize="8" fill="#323232">SMS</text></svg>
          </button>
        </div>
      </nav>
      <div className="flex min-h-0 flex-1 gap-1 border-t border-b border-t-[#9a9a9a] border-b-[#efefdc]">
        <Sidebar />
        <main className="flex min-w-0 flex-1 flex-col border-r border-l border-[#a0a0a0]">
          <div className="flex h-[35px] shrink-0 items-end justify-between border-b border-[#5c6268] bg-[#424c56] pl-[19px]">
            <div className="flex h-6 items-center gap-[6px] rounded-t-md bg-white pt-[2px] pr-2 pl-[10px] font-['Noto_Sans',sans-serif] text-[11px] font-bold">
              Status tabelaryczny
              <button aria-label="Zamknij kartę"><svg width="9" height="9" viewBox="0 0 9 9"><path d="M1 1l7 7M8 1L1 8" stroke="#cf1010" strokeWidth="2.200" /></svg></button>
            </div>
            <div className="flex items-center gap-2 pr-2 pb-[18px]">
              <svg width="8" height="5" viewBox="0 0 8 5"><path d="M0 0h8L4 5z" fill="#000" /></svg>
              <button aria-label="Zamknij"><svg width="9" height="9" viewBox="0 0 9 9"><path d="M0 0l9 9M9 0L0 9" stroke="#000" strokeWidth="1.300" /></svg></button>
            </div>
          </div>
          <div className="mt-px flex h-[25px] shrink-0 items-center border-t border-b border-t-[#b8b8b8] border-b-[#e4e8ec] pl-1 text-[#777]">
            <button aria-label="Dodaj pojazd" className="border-r border-[#c4c4c4] pr-[6px]">
              <svg width="16" height="16" viewBox="0 0 16 16" fill="none">
                <path d="M1 13.500V11q2-1 4-3.500h4q2 3 5.500 3.500v2.500z" stroke="#e02424" strokeWidth="1.300" />
                <circle cx="4" cy="13.800" r="1.500" fill="#3fae29" /><circle cx="12" cy="13.800" r="1.500" fill="#3fae29" />
                <path d="M11.500 0v7M8 3.500h7" stroke="#31a81d" strokeWidth="2.400" />
              </svg>
            </button>
            <label className={`${TAHOMA} flex items-center gap-[5px] pl-4 text-[11px]`}>
              Filtr:
              <input className="h-[21px] w-[136px] border border-[#c3c8d2] px-1" />
            </label>
            <button aria-label="Informacje" className="mr-[5px] ml-auto">
              <svg width="16" height="16" viewBox="0 0 16 16"><circle cx="8" cy="8" r="7.600" fill="#3a7fe8" stroke="#2460bd" strokeWidth=".8" /><circle cx="8" cy="3.800" r="1.300" fill="#fff" /><path d="M6.500 6.500H9V12h1M6.500 12H9" stroke="#fff" strokeWidth="1.600" fill="none" /></svg>
            </button>
          </div>
          <div className="flex min-h-0 flex-1 gap-1 pb-[5px]">
            <section className="flex min-w-0 flex-1 flex-col">
              <header className={`${TAHOMA} flex h-[19px] shrink-0 items-center justify-between border-b border-[#d5dde6] bg-linear-to-b from-[#a9c4e2] to-[#98b2d0] pr-[6px] pl-[5px] text-[11px]`}>
                Lokalizacja <Pin />
              </header>
              <div className="relative min-h-0 flex-1 overflow-hidden">
                <div className="absolute inset-0"><MapView /></div>
                <div className="absolute top-1 right-[7px] flex h-[26px] items-stretch gap-1 font-['Noto_Sans',sans-serif] text-[11px] text-[#666]">
                  <button className="mr-[5px] flex w-[110px] items-center gap-[6px] border border-[#ccd3da] bg-white pl-1">
                    <svg width="18" height="18" viewBox="0 0 18 18" fill="none">
                      <path d="M3 4.500Q9-1.500 14.500 4t.5 10q-3 4-8 3" stroke="#f28a1c" strokeWidth="1.800" />
                      <path d="M1.500 4v3q.5 2 3 2H12M9 5.500L12.500 9 9 12.500" stroke="#e02424" strokeWidth="2.400" />
                    </svg>
                    Emapa
                  </button>
                  <button className="flex w-[110px] items-center gap-1 overflow-hidden border border-[#e8d37c] bg-linear-to-b from-[#fdf4d6] to-[#fcf8b4] pl-[3px]">
                    <svg className="shrink-0" width="18" height="18" viewBox="0 0 18 18">
                      <rect width="18" height="18" fill="#d9e8c4" /><path d="M0 6l6-6M3 14L18 2M9 18l9-7" stroke="#b0cf90" strokeWidth="2" />
                      <circle cx="11.500" cy="6" r="5" fill="#cfe3f2" stroke="#9aa7b3" strokeWidth="1.400" /><path d="M8 10l-6 7" stroke="#222" strokeWidth="3" />
                    </svg>
                    OpenStreetMap
                  </button>
                  <button aria-label="Trasa" className="mr-[2px] flex w-[26px] items-center justify-center border border-[#ccd3da] bg-white">
                    <svg width="12" height="17" viewBox="0 0 12 17" fill="none" stroke="#1b8ee6" strokeWidth="2"><path d="M2 15.500V5.500L10.500 2" /><g fill="#1b8ee6" stroke="none"><circle cx="2" cy="15.500" r="1.500" /><circle cx="2" cy="5.500" r="1.900" /><circle cx="10.500" cy="1.800" r="1.500" /></g></svg>
                  </button>
                  <button aria-label="Globus" className="flex w-[26px] items-center justify-center border border-[#ccd3da] bg-white">
                    <svg width="16" height="16" viewBox="0 0 16 16"><circle cx="8" cy="8" r="7.500" fill="#2ab0cf" stroke="#234" strokeWidth=".8" /><path d="M2 4q3-3 6-3l1 2-2 2 1 2-3 1-2-1-2 1zM6 9l4 0 1 2-3 4-1-2zM10 3l3-.5 2 4-1 3-2-1-2-2z" fill="#1d7a2c" /></svg>
                  </button>
                </div>
                <a href="#osm" className="absolute right-[5px] bottom-1 bg-white/90 px-[3px] font-['Liberation_Sans',sans-serif] text-[11px] text-[#0070a8] underline">Źródło mapy: OpenStreetMap.org</a>
              </div>
            </section>
            <ParamPanel />
          </div>
          <section className="flex h-[321px] shrink-0 flex-col border-2 border-r-[3px] border-[#a0a0a0] bg-white">
            <div className="flex min-h-0 flex-1">
              <div className="min-w-0 flex-1 overflow-hidden"><VehicleTable /></div>
              <div className="flex w-4 shrink-0 flex-col items-center bg-[#f0f0f0] pt-1 pb-1">
                <svg width="8" height="10" viewBox="0 0 8 10"><path d="M0 7l4-4 4 4" fill="none" stroke="#555" strokeWidth="2" /></svg>
                <div className="mt-[2px] h-[108px] w-full bg-[#cdcdcd]" />
                <svg className="mt-auto mb-1" width="8" height="6" viewBox="0 0 8 6"><path d="M0 1l4 4 4-4" fill="none" stroke="#555" strokeWidth="2" /></svg>
              </div>
            </div>
            <div className="mb-[2px] flex h-4 shrink-0 items-center border-t border-white bg-[#f0f0f0] pr-6 pl-[5px]">
              <svg width="6" height="8" viewBox="0 0 6 8"><path d="M5 0L1 4l4 4" fill="none" stroke="#555" strokeWidth="2" /></svg>
              <div className="ml-[6px] h-full w-[1361px] bg-[#cdcdcd]" />
              <svg className="ml-auto" width="6" height="8" viewBox="0 0 6 8"><path d="M1 0l4 4-4 4" fill="none" stroke="#555" strokeWidth="2" /></svg>
            </div>
          </section>
        </main>
      </div>
      {/* Frame that marks the odometer row */}
      <div className="pointer-events-none absolute top-[283px] right-[9px] h-[27px] w-[588px] border-[5px] border-[#ec1c24]" />
    </div>
  );
}
